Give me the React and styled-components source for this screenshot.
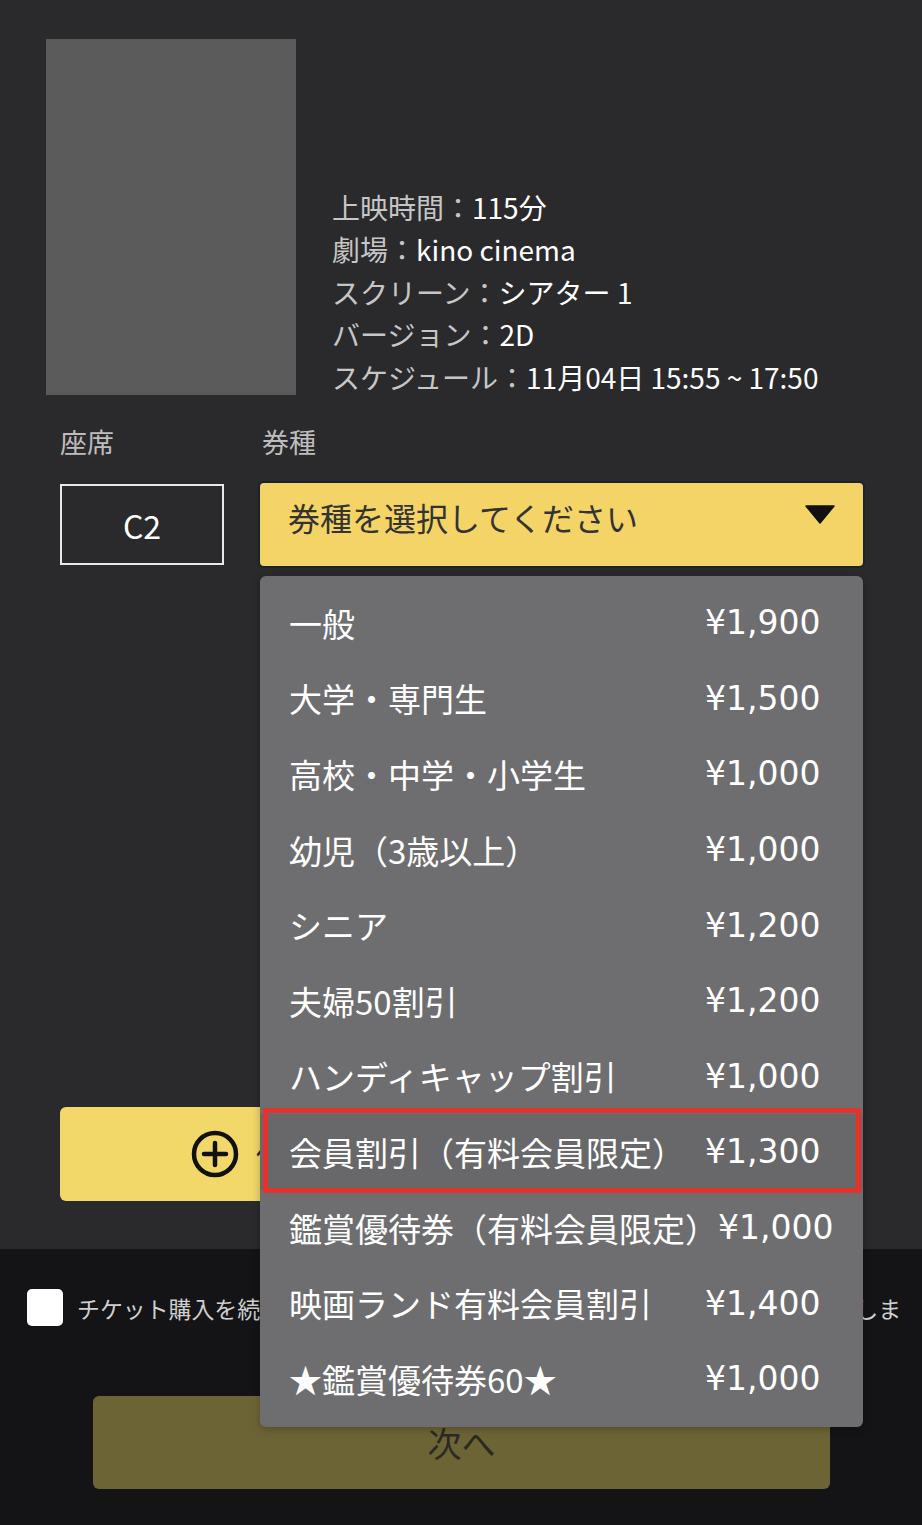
import React from 'react';
import styled, { createGlobalStyle } from 'styled-components';

const GlobalStyle = createGlobalStyle`
  body {
    margin: 0;
    background: #141416;
    font-family: "Noto Sans CJK JP", "Noto Sans", sans-serif;
  }
`;

const Page = styled.div`
  width: 922px;
  min-height: 1525px;
  display: flex;
  flex-direction: column;
  overflow: hidden;
`;

const TopSection = styled.section`
  background: #2a2a2d;
  padding: 39px 59px 48px 46px;
`;

const MovieRow = styled.div`
  display: flex;
  align-items: flex-end;
  gap: 36px;
`;

const Poster = styled.div`
  width: 250px;
  height: 356px;
  background: #5b5b5b;
`;

const InfoList = styled.div`
  display: flex;
  flex-direction: column;
  margin-bottom: -3px;
`;

const InfoLine = styled.div`
  font-size: 28px;
  line-height: 42.5px;
  color: #ffffff;
  white-space: nowrap;
`;

const InfoLabel = styled.span`
  color: #c6c6c6;
`;

const Form = styled.div`
  margin: 32px 0 0 14px;
`;

const FieldGrid = styled.div`
  display: grid;
  grid-template-columns: 164px 1fr;
  column-gap: 36px;
  align-items: start;
`;

const FieldLabel = styled.div`
  font-size: 27px;
  line-height: 30px;
  color: #bdbdbd;
  margin-bottom: 27px;
  padding-left: ${props => props.indent || 0}px;
`;

const SeatBox = styled.div`
  box-sizing: border-box;
  height: 81px;
  border: 2px solid #e8e8e8;
  display: flex;
  align-items: center;
  justify-content: center;
  font-size: 32px;
  color: #ffffff;
`;

const SelectWrap = styled.div`
  position: relative;
  margin-top: -1px;
`;

const SelectBox = styled.div`
  box-sizing: border-box;
  height: 83px;
  background: #f4d466;
  border-radius: 4px;
  box-shadow: 0 0 0 2px #1c2230;
  display: flex;
  justify-content: space-between;
  align-items: flex-start;
  padding: 14px 28px 0 28px;
  font-size: 32px;
  line-height: 40px;
  color: #333333;
`;

const Caret = styled.svg`
  margin-top: 8px;
`;

const Dropdown = styled.ul`
  position: absolute;
  top: calc(100% + 10px);
  left: 0;
  right: 0;
  z-index: 10;
  margin: 0;
  padding: 9px 0 10px;
  list-style: none;
  background: #6e6e70;
  border-radius: 6px;
  box-shadow: 0 2px 8px rgba(0, 0, 0, 0.25);
`;

const Option = styled.li`
  position: relative;
  height: 75.6px;
  display: flex;
  align-items: center;
  padding-left: 29px;
  font-size: 33px;
  color: #ffffff;
  background: ${props => (props.active ? '#68686a' : 'transparent')};

  &::after {
    content: '';
    display: ${props => (props.active ? 'block' : 'none')};
    position: absolute;
    top: -6px;
    bottom: -3px;
    left: 3px;
    right: 2px;
    border: 5px solid #e5322a;
  }
`;

const OptionName = styled.span`
  min-width: 416px;
  flex-shrink: 0;
  white-space: nowrap;
`;

const OptionPrice = styled.span`
  font-family: "DejaVu Sans", sans-serif;
  font-size: 33px;
  white-space: nowrap;
`;

const AddButton = styled.button`
  margin-top: 541px;
  width: 100%;
  height: 94px;
  border: none;
  border-radius: 6px;
  background: #f2d869;
  display: flex;
  align-items: center;
  gap: 16px;
  padding: 0 0 0 130px;
  font-family: inherit;
  font-size: 30px;
  color: #222222;
`;

const BottomSection = styled.section`
  flex: 1;
  display: flex;
  flex-direction: column;
  background: #141416;
  padding-top: 40px;
`;

const CheckRow = styled.label`
  display: flex;
  align-items: center;
  gap: 14px;
  padding: 0 22px 0 27px;
  height: 37px;
`;

const CheckBox = styled.span`
  flex-shrink: 0;
  width: 36px;
  height: 37px;
  border-radius: 5px;
  background: #ffffff;
`;

const CheckText = styled.span`
  font-size: 22.9px;
  color: #cfcfcf;
  white-space: nowrap;
  overflow: hidden;
`;

const NextButton = styled.button`
  display: flex;
  align-items: center;
  justify-content: center;
  margin: 70px 92px 0 93px;
  height: 93px;
  border: none;
  border-radius: 6px;
  background: #6d6436;
  font-family: inherit;
  font-size: 34px;
  color: #2b2a22;
`;

const info = [
  ['上映時間：', '115分'],
  ['劇場：', 'kino cinema'],
  ['スクリーン：', 'シアター 1'],
  ['バージョン：', '2D'],
  ['スケジュール：', '11月04日 15:55 ~ 17:50'],
];

const tickets = [
  ['一般', '¥1,900'],
  ['大学・専門生', '¥1,500'],
  ['高校・中学・小学生', '¥1,000'],
  ['幼児（3歳以上）', '¥1,000'],
  ['シニア', '¥1,200'],
  ['夫婦50割引', '¥1,200'],
  ['ハンディキャップ割引', '¥1,000'],
  ['会員割引（有料会員限定）', '¥1,300'],
  ['鑑賞優待券（有料会員限定）', '¥1,000'],
  ['映画ランド有料会員割引', '¥1,400'],
  ['★鑑賞優待券60★', '¥1,000'],
];

const PlusCircle = () => (
  <svg width="50" height="50" viewBox="0 0 50 50" fill="none" stroke="#111" strokeWidth="4.5" strokeLinecap="round">
    <circle cx="25" cy="25" r="21" />
    <path d="M14 25h22M25 14v22" />
  </svg>
);

const App = () => (
  <Page>
    <GlobalStyle />
    <TopSection>
      <MovieRow>
        <Poster />
        <InfoList>
          {info.map(([label, value]) => (
            <InfoLine key={label}>
              <InfoLabel>{label}</InfoLabel>
              {value}
            </InfoLine>
          ))}
        </InfoList>
      </MovieRow>

      <Form>
        <FieldGrid>
          <FieldLabel>座席</FieldLabel>
          <FieldLabel indent={2}>券種</FieldLabel>
          <SeatBox>C2</SeatBox>
          <SelectWrap>
            <SelectBox>
              <span>券種を選択してください</span>
              <Caret width="30" height="19" viewBox="0 0 30 19">
                <path d="M1 1h28L15 18z" fill="#111" stroke="#111" strokeWidth="1.5" strokeLinejoin="round" />
              </Caret>
            </SelectBox>
            <Dropdown>
              {tickets.map(([name, price], i) => (
                <Option key={name} active={i === 7}>
                  <OptionName>{name}</OptionName>
                  <OptionPrice>{price}</OptionPrice>
                </Option>
              ))}
            </Dropdown>
          </SelectWrap>
        </FieldGrid>
        <AddButton>
          <PlusCircle />
          <span>他の券種を追加する</span>
        </AddButton>
      </Form>
    </TopSection>

    <BottomSection>
      <CheckRow>
        <CheckBox />
        <CheckText>チケット購入を続ける場合は、利用規約及び注意事項に同意したものとみなします</CheckText>
      </CheckRow>
      <NextButton>次へ</NextButton>
    </BottomSection>
  </Page>
);

export default App;
